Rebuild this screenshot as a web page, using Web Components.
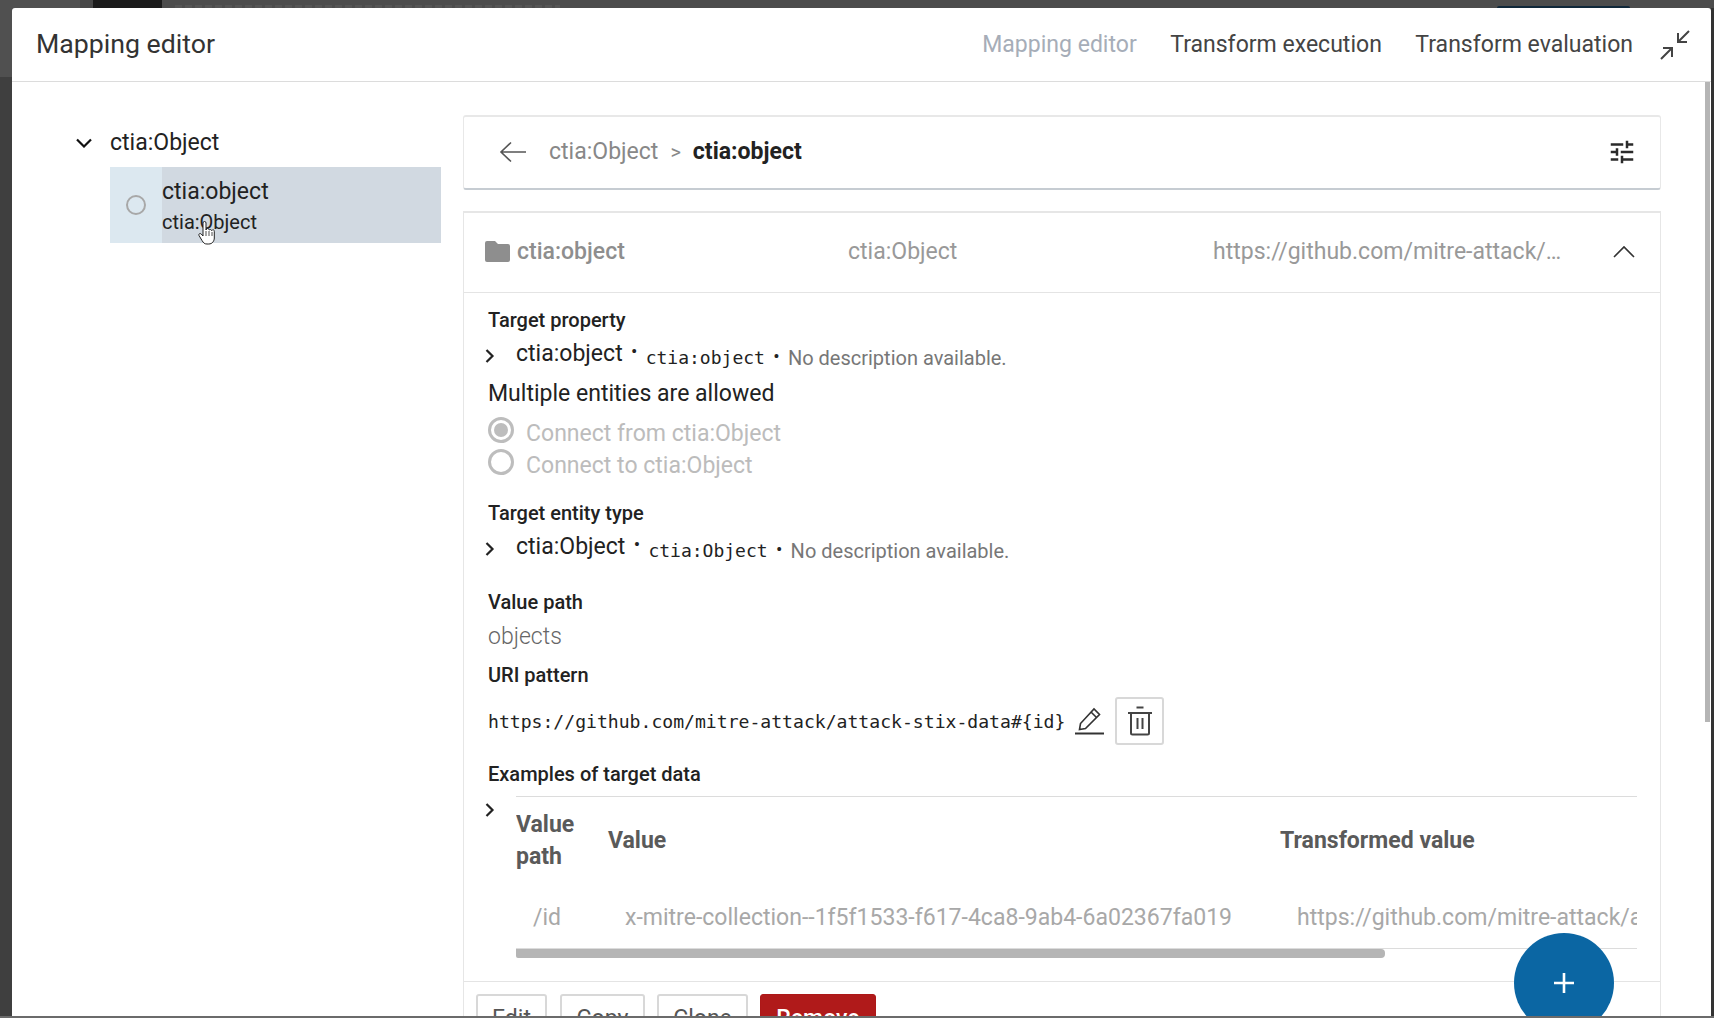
<!DOCTYPE html>
<html lang="en"><head><meta charset="utf-8"><title>Mapping editor</title>
<style>html,body{margin:0;padding:0;background:#4a4a4a;overflow:hidden}body{font-family:Roboto,"Liberation Sans",sans-serif}</style>
</head><body>
<x-app>
  <x-modal>
    <x-modal-header slot="header"></x-modal-header>
    <x-mapping-tree slot="tree"></x-mapping-tree>
    <x-breadcrumb-card slot="main"></x-breadcrumb-card>
    <x-entity-card slot="main" style="margin-top:21px"></x-entity-card>
  </x-modal>
</x-app>
<script>
function def(name, html){
  const t=document.createElement('template');t.innerHTML=html;
  customElements.define(name,class extends HTMLElement{constructor(){super();this.attachShadow({mode:'open'}).appendChild(t.content.cloneNode(true));}});
}
const chevR='<svg width="12" height="16" viewBox="0 0 12 16" fill="none" stroke="#222" stroke-width="2.2"><path d="M2.5 2l6 6-6 6"/></svg>';

def('x-app',`<style>
:host{display:grid;grid-template-columns:12px 1fr 3px;grid-template-rows:8px 1008px 2px;width:1714px;height:1018px;overflow:hidden;background:#4a4a4a;font-family:Roboto,"Liberation Sans",sans-serif}
.top{grid-column:1/4;display:flex;background:#4c4c4c}
.a{width:80px;background:#505050}.b{width:13px;background:#474747}.c{width:69px;background:#1b1b1b}
.d{margin:5px 0 0 13px;width:385px;height:3px;background:repeating-linear-gradient(90deg,#555 0 7px,#4c4c4c 7px 10px)}
.e{flex:1}.f{width:133px;margin-top:6px;background:#10283a;border-radius:3px 3px 0 0}.g{width:84px}
.left{background:linear-gradient(#505050 0 69px,#3f3f3f 69px)}
.right{background:#333}.bottom{grid-column:1/4;background:#6b6b6b}
</style>
<div class="top"><i class="a"></i><i class="b"></i><i class="c"></i><i class="d"></i><i class="e"></i><i class="f"></i><i class="g"></i></div>
<div class="left"></div><slot></slot><div class="right"></div><div class="bottom"></div>`);

def('x-modal',`<style>
:host{display:flex;flex-direction:column;position:relative;background:#fff;border-radius:3px 3px 0 0;overflow:hidden;min-height:0}
.body{flex:1;display:grid;grid-template-columns:451px 1198px;align-content:start;overflow:hidden;min-height:0}
.main{display:flex;flex-direction:column;padding-top:33px}
.thumb{position:absolute;right:1px;top:74px;width:5px;height:640px;background:#b5b5b5}
.fab{position:absolute;left:1502px;top:925px}
</style>
<slot name="header"></slot>
<div class="body"><div><slot name="tree"></slot></div><div class="main"><slot name="main"></slot></div></div>
<div class="thumb"></div><x-fab class="fab"></x-fab><x-hand-cursor style="position:absolute;left:186px;top:213px"></x-hand-cursor>`);

def('x-modal-header',`<style>
:host{display:flex;align-items:center;height:73px;border-bottom:1px solid #dcdcdc;flex:none;padding:0 21px 0 24px;color:#333;box-sizing:content-box}
.t{font-size:26.7px;flex:1;color:#333;padding-bottom:2px}
a{font-size:23.04px;margin-right:33.5px;color:#444;padding-bottom:1px}
a.on{color:#a6adb8}
svg{display:block}
a:last-of-type{margin-right:27px}
</style>
<div class="t">Mapping editor</div><a class="on">Mapping editor</a><a>Transform execution</a><a>Transform evaluation</a>
<svg width="30" height="30" viewBox="0 0 30 30" fill="none" stroke="#444" stroke-width="2"><path d="M29 1L18 12M18 3v9h9M1 29l11-11M3 18h9v9"/></svg>`);

def('x-mapping-tree',`<style>
:host{display:block;padding:46px 22px 0 98px;color:#222}
.h{display:flex;align-items:center;height:29px;font-size:23.04px}
.ch{width:36px;display:flex;justify-content:center;margin-left:-36px}
.h svg{display:block;margin-left:-16px}
.sel{display:grid;grid-template-columns:52px 1fr;height:76px;margin-top:10px}
.l{background:#dce8f0;display:flex;align-items:center;justify-content:center}
.r{background:#d1d9e1;display:flex;flex-direction:column;padding-top:9px;box-sizing:border-box}
.rad{width:16px;height:16px;border:2px solid #a8a8a8;border-radius:50%}
.a{font-size:23.04px;line-height:32px}.b{font-size:20px;line-height:28px}
</style>
<div class="h"><span class="ch"><svg width="16" height="10" viewBox="0 0 16 10" fill="none" stroke="#111" stroke-width="2.2"><path d="M1 1.5l7 7 7-7"/></svg></span>ctia:Object</div>
<div class="sel"><div class="l"><div class="rad"></div></div><div class="r"><div class="a">ctia:object</div><div class="b">ctia:Object</div></div></div>`);

def('x-breadcrumb-card',`<style>
:host{display:flex;align-items:center;box-sizing:border-box;height:75px;border:1px solid #e8e8e8;border-top-width:2px;border-bottom:2px solid #c6ccd2;border-radius:3px;padding:0 23px 2px 35px;font-size:23.04px;color:#888}
svg{display:block}
.s{margin:0 12px;font-size:20px;color:#888}
b{color:#222;font-weight:700}
.sp{flex:1}
.c{margin-left:22px}
</style>
<svg width="28" height="22" viewBox="0 0 28 22" fill="none" stroke="#555" stroke-width="1.6"><path d="M27 11H2M12 1.5L2 11l10 9.5"/></svg>
<span class="c">ctia:Object</span><span class="s">&gt;</span><b>ctia:object</b><span class="sp"></span>
<svg width="30" height="30" viewBox="0 0 24 24" fill="#2a2a2a"><path d="M3 17v2h6v-2H3zM3 5v2h10V5H3zm10 16v-2h8v-2h-8v-2h-2v6h2zM7 9v2H3v2h4v2h2V9H7zm14 4v-2H11v2h10zm-6-4h2V7h4V5h-4V3h-2v6z"/></svg>`);

def('x-entity-card',`<style>
:host{display:block;border:1px solid #e6e6e6;border-top-width:2px;border-bottom:0;color:#222}
.head{display:flex;align-items:center;border-bottom:1px solid #e4e4e4;padding:0 0 3px 21px;box-sizing:border-box;height:80px;font-size:23.04px;color:#999}
.c1{width:363px;display:flex;align-items:center;gap:7px;font-weight:500;color:#8e8e8e}
.c1 svg{display:block}
.c2{width:365px}
.c3{width:351px;white-space:nowrap;overflow:hidden;text-overflow:ellipsis}
.up{margin-left:49px;display:block;margin-top:1px}
.body{padding:13px 21px 0 24px}
.foot{display:flex;border-top:1px solid #e4e4e4;margin-top:23px;padding:12px 11px 0 12px}
.m{font-size:23.04px;height:30px;line-height:30px;margin-top:8px}
.obj{font-size:23.04px;height:30px;line-height:30px;color:#666;font-weight:300;margin-top:6px}
</style>
<div class="head"><div class="c1"><svg width="25" height="21" viewBox="0 0 25 21" fill="#8e8e8e"><path d="M2 0h8l3 3h10a2 2 0 0 1 2 2v14a2 2 0 0 1-2 2H2a2 2 0 0 1-2-2V2a2 2 0 0 1 2-2z"/></svg><span>ctia:object</span></div><div class="c2">ctia:Object</div><div class="c3">https://github.com/mitre-attack/attack-stix-data#{id}</div>
<svg class="up" width="22" height="13" viewBox="0 0 22 13" fill="none" stroke="#333" stroke-width="1.6"><path d="M1 12L11 2l10 10"/></svg></div>
<div class="body">
<x-label>Target property</x-label>
<x-prop-row name="ctia:object" code="ctia:object"></x-prop-row>
<div class="m">Multiple entities are allowed</div>
<x-radio style="margin-top:5px;--tp:4px" checked>Connect from ctia:Object</x-radio>
<x-radio style="margin-top:0;--tp:4px">Connect to ctia:Object</x-radio>
<x-label style="margin-top:21px">Target entity type</x-label>
<x-prop-row name="ctia:Object" code="ctia:Object"></x-prop-row>
<x-label style="margin-top:24px">Value path</x-label>
<div class="obj">objects</div>
<x-label style="margin-top:9px">URI pattern</x-label>
<x-uri-row style="margin-top:8px"></x-uri-row>
<x-label style="margin-top:15px">Examples of target data</x-label>
<x-examples style="margin-top:8px"></x-examples>
</div>
<div class="foot"><x-btn style="width:71px">Edit</x-btn><x-btn style="width:85px;margin-left:13px">Copy</x-btn><x-btn style="width:91px;margin-left:12px">Clone</x-btn><x-btn danger style="width:116px;margin-left:12px">Remove</x-btn></div>`);

def('x-label',`<style>:host{display:block;height:28px;line-height:28px;font-size:20px;font-weight:500;color:#222}</style><slot></slot>`);

customElements.define('x-prop-row',class extends HTMLElement{constructor(){super();const s=this.attachShadow({mode:'open'});
s.innerHTML=`<style>
:host{display:flex;align-items:flex-start;height:34px;margin-top:3px;color:#222;margin-left:-4px}
.ch{width:32px;padding-top:11px;flex:none}.ch svg{display:block}
.n{font-size:23.04px;line-height:34px}
.d{width:23px;text-align:center;font-size:19px;line-height:30px;flex:none}
.d.b{line-height:40px}
code{font-family:"DejaVu Sans Mono",monospace;font-size:18px;line-height:42px;font-weight:500}
.x{font-size:20px;color:#777;line-height:42px}
</style><span class="ch">${chevR}</span><span class="n"></span><span class="d">•</span><code></code><span class="d b">•</span><span class="x">No description available.</span>`;
s.querySelector('.n').textContent=this.getAttribute('name');s.querySelector('code').textContent=this.getAttribute('code');}});

customElements.define('x-radio',class extends HTMLElement{constructor(){super();const s=this.attachShadow({mode:'open'});
const on=this.hasAttribute('checked');
s.innerHTML=`<style>
:host{display:flex;align-items:flex-start;height:32px;color:#bcbcbc;font-size:23.04px}
.o{box-sizing:border-box;width:26px;height:26px;border:3px solid #bdbdbd;border-radius:50%;margin:3px 12px 0 0;display:flex;align-items:center;justify-content:center;flex:none}
.o i{width:14px;height:14px;border-radius:50%;background:#bdbdbd}
span{line-height:32px;padding-top:var(--tp,4px)}
</style><div class="o">${on?'<i></i>':''}</div><span><slot></slot></span>`;}});

def('x-uri-row',`<style>
:host{display:flex;align-items:center;height:48px}
code{font-family:"DejaVu Sans Mono",monospace;font-size:18.1px;color:#222}
svg{display:block}
.e{margin-left:10px}
.btn{margin-left:11px;width:49px;height:48px;box-sizing:border-box;border:2px solid #d8d8d8;border-radius:3px;display:flex;align-items:center;justify-content:center}
</style>
<code>https://github.com/mitre-attack/attack-stix-data#{id}</code>
<svg class="e" width="29" height="28" viewBox="0 0 29 28" fill="none" stroke="#333" stroke-width="1.6"><path d="M4.500 22.500l1-6L19 2l5.500 5.500L10.500 21.500z"/><path d="M16 5l5.500 5.500"/><path d="M0 26.500h29" stroke-width="2"/></svg>
<div class="btn"><svg width="26" height="30" viewBox="0 0 26 30" fill="none" stroke="#444" stroke-width="2"><path d="M9.500 1.500h7M1 7h24M4 7v20a1.500 1.500 0 0 0 1.500 1.500h15A1.500 1.500 0 0 0 22 27V7M10.500 12v11M15.500 12v11"/></svg></div>`);

def('x-examples',`<style>
:host{display:flex;color:#222}
.ch{width:32px;margin-left:-4px;padding-top:6px;flex:none}.ch svg{display:block}
.w{width:1121px}
.clip{overflow:hidden;border-top:1px solid #dcdcdc;border-bottom:1px solid #dcdcdc;height:151px}
table{border-collapse:collapse;table-layout:fixed;width:1500px;font-size:23.04px}
th{text-align:left;font-weight:700;color:#5a5a5a;height:88px;padding:0;line-height:32.500px;vertical-align:middle}
td{color:#a8a8a8;height:64px;padding:0 0 0 17px;white-space:nowrap;vertical-align:middle}
.sb{height:9px;width:869px;background:#b5b5b5;border-radius:0 4px 4px 2px}
</style>
<div class="ch">${chevR}</div>
<div class="w"><div class="clip"><table><colgroup><col style="width:92px"><col style="width:672px"><col style="width:736px"></colgroup>
<thead><tr><th>Value<br>path</th><th>Value</th><th>Transformed value</th></tr></thead>
<tbody><tr><td>/id</td><td>x-mitre-collection--1f5f1533-f617-4ca8-9ab4-6a02367fa019</td><td>https://github.com/mitre-attack/attack-stix-data#x-mitre-collection</td></tr></tbody></table></div>
<div class="sb"></div></div>`);

customElements.define('x-btn',class extends HTMLElement{constructor(){super();const s=this.attachShadow({mode:'open'});
const d=this.hasAttribute('danger');
s.innerHTML=`<style>:host{display:flex;box-sizing:border-box;height:48px;align-items:center;justify-content:center;border:${d?'1px solid #ad1818':'2px solid #d8d8d8'};border-radius:3px;font-size:23.04px;color:${d?'#fff':'#555'};background:${d?'#b01a1a':'#fff'};font-weight:${d?500:400}}</style><slot></slot>`;}});

def('x-fab',`<style>:host{display:flex;width:100px;height:100px;border-radius:50%;background:#0b66a3;align-items:center;justify-content:center}svg{display:block}</style>
<svg width="20" height="20" viewBox="0 0 20 20" fill="#fff"><path d="M8.700 0h2.600v8.700H20v2.600h-8.700V20H8.700v-8.700H0V8.700h8.700z"/></svg>`);

def('x-hand-cursor',`<style>:host{display:block;width:18px;height:24px}svg{display:block}</style>
<svg width="18" height="24" viewBox="0 0 18 24" fill="#fff" stroke="#222" stroke-width="1"><path d="M5 2a1.500 1.500 0 0 1 3 0v7l.5-1a1.400 1.400 0 0 1 2.500.5l.3.5a1.400 1.400 0 0 1 2.400.6 1.400 1.400 0 0 1 2.600 1V17c0 3-2 6-5.500 6H9c-2.500 0-3.500-1-5-3.500L1 14.500c-.7-1.500 1-2.700 2.200-1.500L5 15z"/><path d="M8 10v5M11 10v5M14 11v4" stroke-width=".8"/></svg>`);
</script>
</body></html>
